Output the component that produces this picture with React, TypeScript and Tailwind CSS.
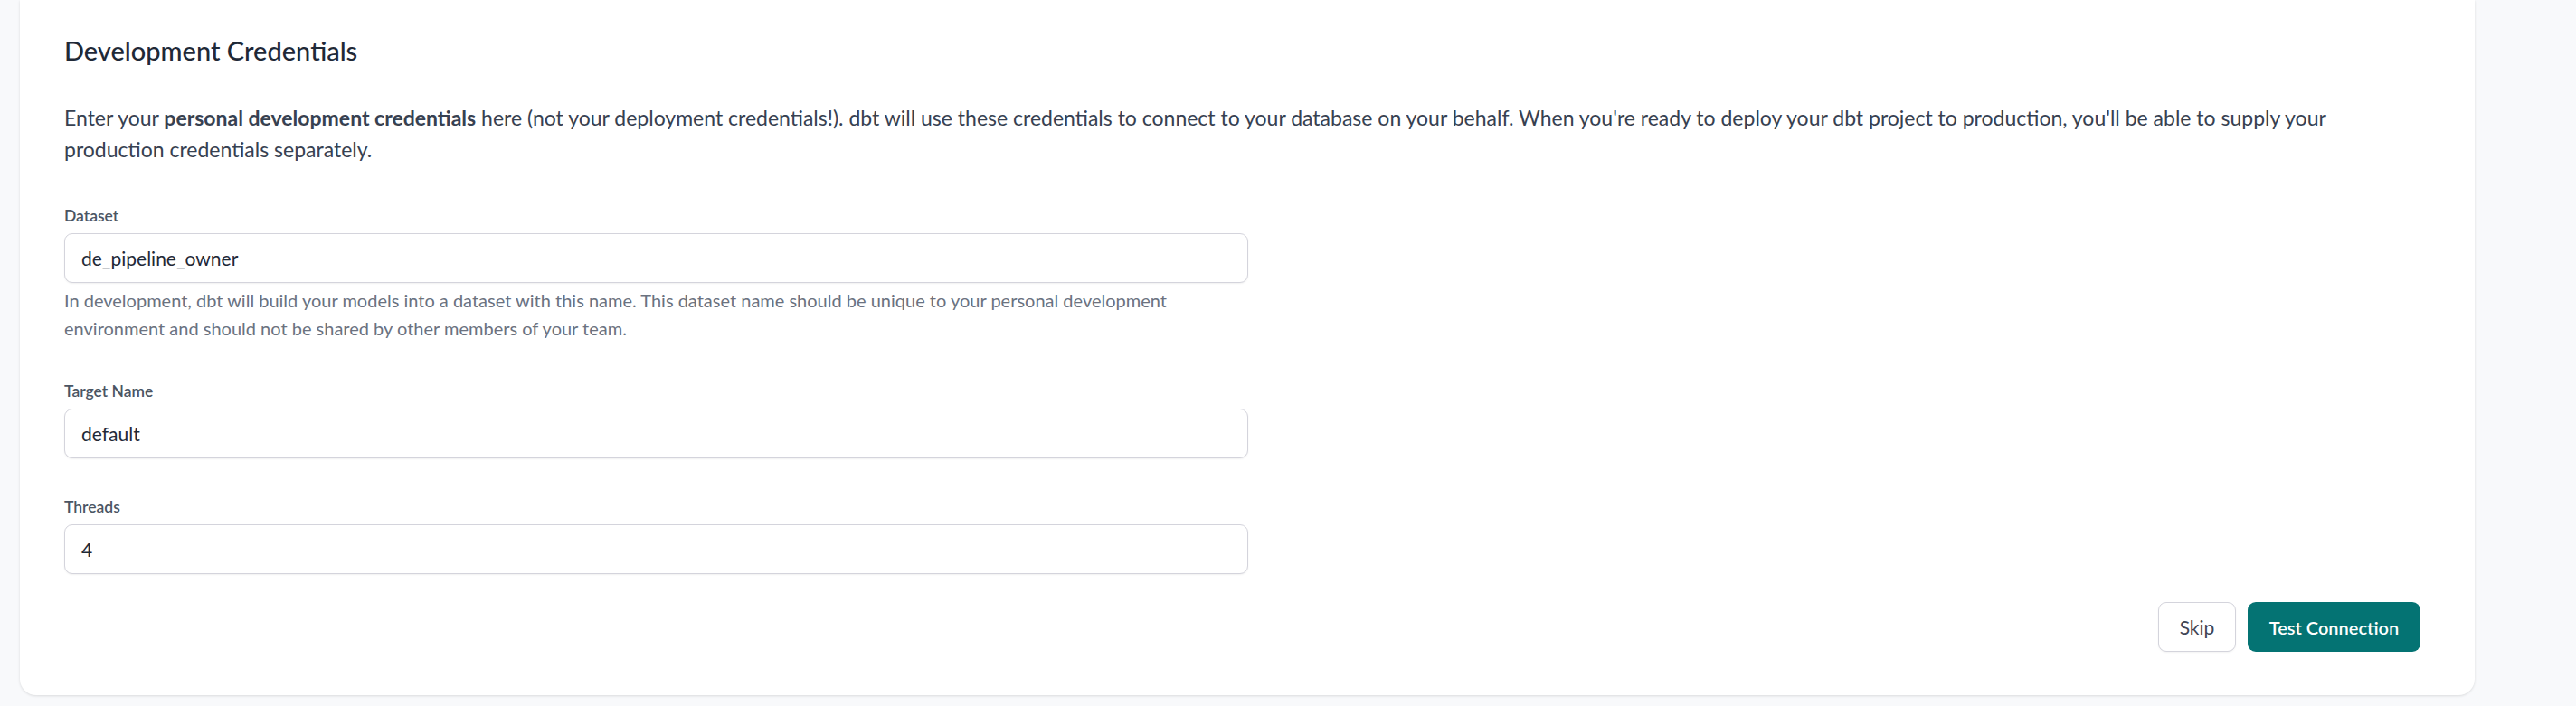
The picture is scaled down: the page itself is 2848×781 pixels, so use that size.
import React from "react";

const font = "font-['Lato','Liberation_Sans',sans-serif]";

function Field({
  label,
  value,
  help,
}: {
  label: string;
  value: string;
  help?: React.ReactNode;
}) {
  return (
    <div className="w-[1309px]">
      <label className="block text-[17.5px] leading-[24px] font-semibold text-[#4b5563] mb-[7px]">
        {label}
      </label>
      <div className="h-[55px] flex items-center rounded-[9px] border border-[#d4d4dc] shadow-[0_1px_2px_rgba(0,0,0,0.06)] bg-white pl-[18px] text-[21px] text-[#1f2937]">
        {value}
      </div>
      {help && (
        <p className="mt-[4px] text-[20px] leading-[31px] text-[#6b7280] whitespace-nowrap">
          {help}
        </p>
      )}
    </div>
  );
}

export default function App() {
  return (
    <div className={`min-h-screen bg-[#f8f9fb] pl-[22px] pr-[112px] ${font}`}>
      <div className="bg-white rounded-b-[18px] shadow-[0_1px_3px_rgba(0,0,0,0.12)] pl-[49px] pr-[60px] pt-[35px] pb-[48px]">
        <h2 className="text-[29px] leading-[42px] font-medium text-[#1f2937]">
          Development Credentials
        </h2>

        <p className="mt-[36px] text-[23px] leading-[35px] text-[#374151] whitespace-nowrap">
          Enter your <strong className="font-bold">personal development credentials</strong> here
          (not your deployment credentials!). dbt will use these credentials to connect to your
          database on your behalf. When you're ready to deploy your dbt project to production,
          you'll be able to supply your
          <br />
          production credentials separately.
        </p>

        <div className="mt-[44px] flex flex-col gap-[42px]">
          <Field
            label="Dataset"
            value="de_pipeline_owner"
            help={
              <>
                In development, dbt will build your models into a dataset with this name. This
                dataset name should be unique to your personal development
                <br />
                environment and should not be shared by other members of your team.
              </>
            }
          />
          <Field label="Target Name" value="default" />
          <Field label="Threads" value="4" />
        </div>

        <div className="mt-[31px] flex justify-end gap-[13px]">
          <button className="w-[86px] h-[55px] rounded-[9px] border border-[#d4d4dc] bg-white text-[21px] text-[#3f4656] shadow-[0_1px_2px_rgba(0,0,0,0.05)]">
            Skip
          </button>
          <button className="w-[191px] h-[55px] rounded-[9px] bg-[#047373] text-[20px] font-semibold text-white">
            Test Connection
          </button>
        </div>
      </div>
    </div>
  );
}
